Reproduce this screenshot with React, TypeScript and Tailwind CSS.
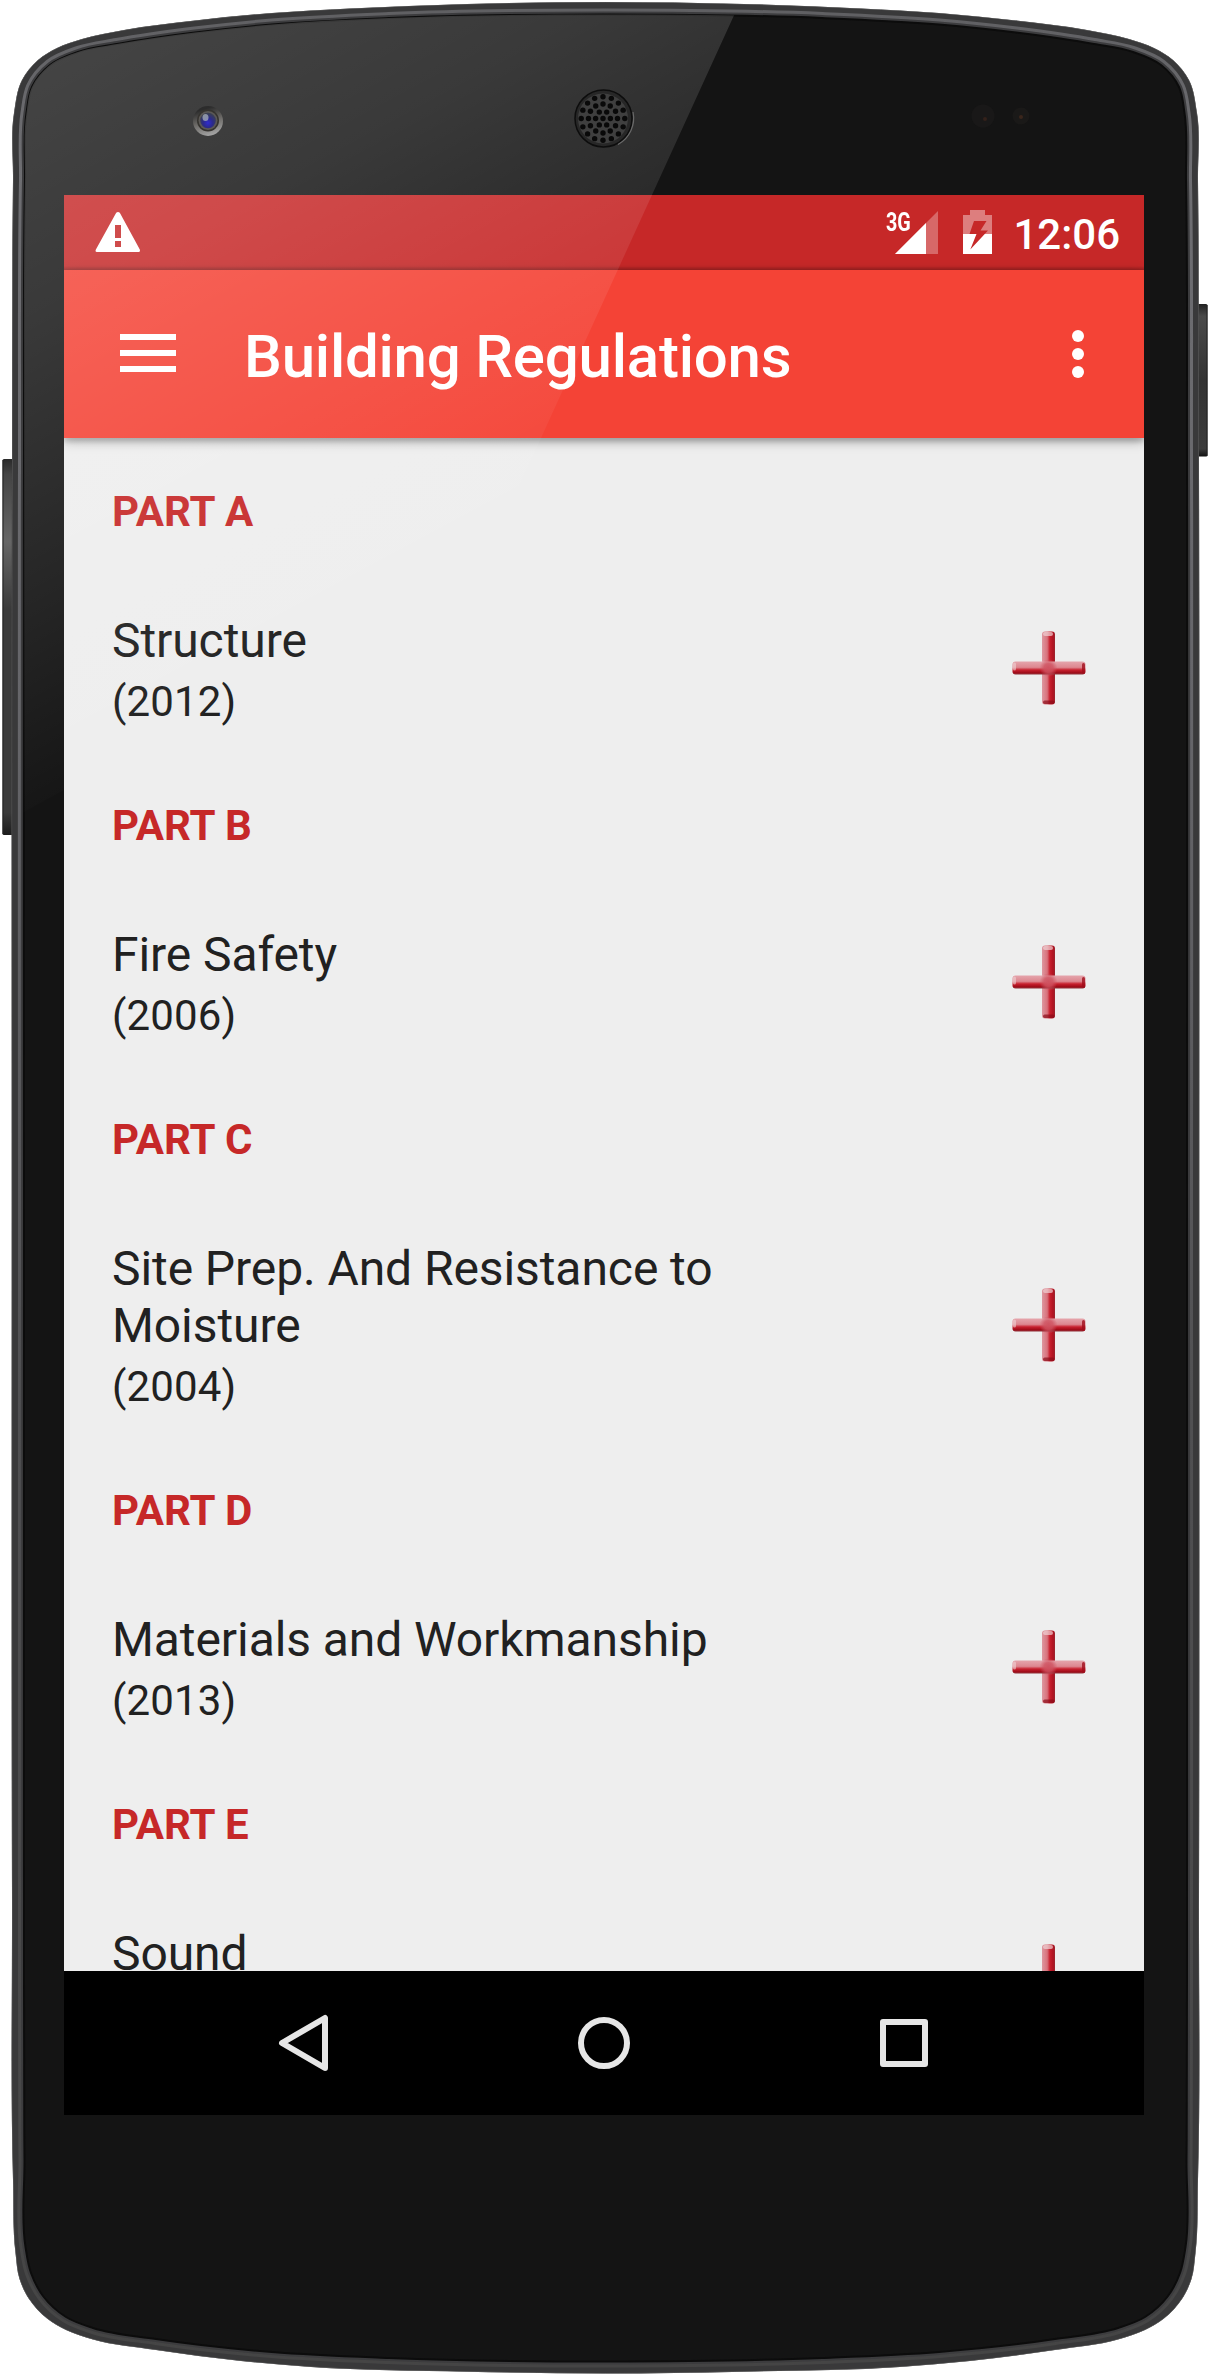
import React from "react";

type Point = [number, number];

const CENTER_X = 605.5;

// Left half of the outer shell, from bottom centre up to top centre.
const SHELL: Point[] = [
  [605.5, 2373.5], [467, 2371.7], [311, 2367], [241, 2361], [156, 2350], [93, 2339.5],
  [66, 2330], [47, 2318.5], [29, 2299], [19.5, 2279], [15.5, 2253], [13, 2180],
  [12, 1900], [11.7, 1200], [12, 460], [13, 180], [14, 113], [22, 80], [38, 60],
  [57, 48], [82, 39], [124, 30], [195, 20.5], [272, 13], [350, 8.5], [467, 4], [605.5, 2],
];

// Left half of the glass, same direction.
const GLASS: Point[] = [
  [605.5, 2361.5], [389, 2358], [272, 2352], [156, 2339], [93, 2328], [66, 2317],
  [43, 2296], [31, 2273], [25.5, 2247], [24.5, 2160], [24, 1900], [24, 1200],
  [24, 460], [25, 180], [26.5, 113], [32, 87], [50, 65], [78, 52], [117, 44],
  [195, 32.5], [272, 24.5], [389, 18], [605.5, 14.5],
];

// Smooth closed outline through the points and their mirror image.
function outline(half: Point[]): string {
  const mirrored = half
    .slice(1, -1)
    .reverse()
    .map(([x, y]): Point => [CENTER_X * 2 - x, y]);
  const pts = [...half, ...mirrored];
  const n = pts.length;
  let d = `M${pts[0][0]} ${pts[0][1]}`;
  const dist = (a: Point, b: Point) => Math.hypot(a[0] - b[0], a[1] - b[1]);
  const tangent = (i: number): Point => {
    const a = pts[(i - 1 + n) % n];
    const p = pts[i % n];
    const b = pts[(i + 1) % n];
    const u = dist(a, p);
    const v = dist(p, b);
    return [0, 1].map((k) => {
      const before = (p[k] - a[k]) / u;
      const after = (b[k] - p[k]) / v;
      return (before * v + after * u) / (u + v);
    }) as Point;
  };
  for (let i = 0; i < n; i++) {
    const p = pts[i];
    const q = pts[(i + 1) % n];
    const len = dist(p, q) / 3;
    const t = tangent(i);
    const s = tangent((i + 1) % n);
    d += `C${p[0] + t[0] * len} ${p[1] + t[1] * len} ${q[0] - s[0] * len} ${q[1] - s[1] * len} ${q[0]} ${q[1]}`;
  }
  return d + "Z";
}

const shellPath = outline(SHELL);
const glassPath = outline(GLASS);

function ring(count: number, radius: number): Point[] {
  return Array.from({ length: count }, (_, i): Point => {
    const a = (i / count) * Math.PI * 2;
    return [603 + Math.cos(a) * radius, 118.5 + Math.sin(a) * radius];
  });
}

const speakerHoles: Point[] = [[603, 118.5], ...ring(6, 7.4), ...ring(12, 14.5), ...ring(16, 21.8)];

function DeviceBody() {
  return (
    <svg className="absolute inset-0" width="1210" height="2375" viewBox="0 0 1210 2375">
      <defs>
        <linearGradient id="left-key" x1="0" y1="0" x2="0" y2="1">
          <stop offset="0" stopColor="#2a2a2a" />
          <stop offset="0.04" stopColor="#444" />
          <stop offset="0.22" stopColor="#666" />
          <stop offset="0.4" stopColor="#3a3a3a" />
          <stop offset="0.94" stopColor="#3a3a3a" />
          <stop offset="1" stopColor="#1c1c1c" />
        </linearGradient>
        <linearGradient id="right-key" x1="0" y1="0" x2="0" y2="1">
          <stop offset="0" stopColor="#222" />
          <stop offset="0.08" stopColor="#4a4a4a" />
          <stop offset="0.5" stopColor="#333" />
          <stop offset="0.95" stopColor="#3c3c3c" />
          <stop offset="1" stopColor="#111" />
        </linearGradient>
        <linearGradient id="rim" x1="0" y1="0" x2="0" y2="1">
          <stop offset="0" stopColor="#606063" />
          <stop offset="0.06" stopColor="#6e6e72" />
          <stop offset="0.3" stopColor="#66666a" />
          <stop offset="0.6" stopColor="#505052" />
          <stop offset="1" stopColor="#454545" />
        </linearGradient>
        <linearGradient id="lens-ring" x1="0.35" y1="0" x2="0.65" y2="1">
          <stop offset="0.1" stopColor="#2c2c2c" />
          <stop offset="0.5" stopColor="#6a6865" />
          <stop offset="1" stopColor="#a8a8a8" />
        </linearGradient>
        <radialGradient id="lens" cx="0.5" cy="0.65" r="0.6">
          <stop offset="0" stopColor="#2f2bd0" />
          <stop offset="0.5" stopColor="#2b2a8c" />
          <stop offset="1" stopColor="#3a3f52" />
        </radialGradient>
        <clipPath id="shell-clip">
          <path d={shellPath} />
        </clipPath>
      </defs>
      <rect x="2.5" y="459" width="14" height="376" rx="1.5" fill="url(#left-key)" />
      <path d="M3 460V834" stroke="#222" strokeWidth="1" />
      <rect x="1194" y="304" width="13.5" height="152.500" rx="1.5" fill="url(#right-key)" />
      <path d="M1207 305V456" stroke="#222" strokeWidth="1" />
      <path d={shellPath} fill="#39393a" />
      <g clipPath="url(#shell-clip)">
        <path d={glassPath} fill="none" stroke="url(#rim)" strokeWidth="12" />
        <path d={glassPath} fill="none" stroke="#3c3c3e" strokeWidth="6" />
        <path d={shellPath} fill="none" stroke="#606060" strokeWidth="1" />
      </g>
      <path d={glassPath} fill="#141414" stroke="#0c0c0c" strokeWidth="2" />
      <circle cx="983" cy="116" r="11.500" fill="#191818" />
      <circle cx="985" cy="119" r="2" fill="#33211a" />
      <circle cx="1021" cy="116" r="8.500" fill="#1a1918" />
      <circle cx="1021" cy="117" r="2" fill="#3a261c" />
    </svg>
  );
}

function Gloss() {
  return (
    <svg className="pointer-events-none absolute inset-0 z-20" width="1210" height="2375" viewBox="0 0 1210 2375">
      <defs>
        <linearGradient id="gloss" gradientUnits="userSpaceOnUse" x1="0" y1="0" x2="344" y2="641">
          <stop offset="0" stopColor="#fff" stopOpacity="0.22" />
          <stop offset="0.4" stopColor="#fff" stopOpacity="0.16" />
          <stop offset="0.75" stopColor="#fff" stopOpacity="0.075" />
          <stop offset="1" stopColor="#fff" stopOpacity="0.01" />
        </linearGradient>
        <clipPath id="glass-clip">
          <path d={glassPath} />
        </clipPath>
      </defs>
      <path d="M0 0H741L483 565L64 790L0 825Z" fill="url(#gloss)" clipPath="url(#glass-clip)" />
      <circle cx="603.500" cy="118.500" r="28.500" fill="#272727" stroke="#0d0d0d" strokeWidth="1.500" />
      <path d="M618 144.500A30 30 0 0 0 633 112" fill="none" stroke="#6a6a6a" strokeWidth="1.200" />
      <circle cx="603" cy="118.500" r="25" fill="#3f3f3f" />
      {speakerHoles.map(([x, y], i) => (
        <circle key={i} cx={x} cy={y} r="2.700" fill="#090909" />
      ))}
      <circle cx="208" cy="121" r="15" fill="url(#lens-ring)" />
      <circle cx="208" cy="120.500" r="11" fill="#35332f" />
      <circle cx="208" cy="120.500" r="9.500" fill="#5b5855" />
      <circle cx="208" cy="120.500" r="7.800" fill="url(#lens)" />
      <ellipse cx="205.500" cy="117.500" rx="3" ry="3.500" fill="#a7b0b8" opacity="0.75" />
    </svg>
  );
}

function StatusBar() {
  return (
    <div className="flex h-[75px] items-start bg-[#c62828] bg-[linear-gradient(to_top,rgba(0,0,0,0.2),transparent_4px)]">
      <svg className="mt-[16px] ml-[31px]" width="46" height="42" viewBox="0 0 46 42">
        <path
          fillRule="evenodd"
          fill="#fff"
          d="M21.200 1.800Q23 .2 24.800 1.800L44.800 38.500Q45.500 41 43.500 41H2Q-.2 41 .9 38.500ZM20 14V27H26V14ZM20 30V36H26V30Z"
        />
      </svg>
      <div className="mt-[16px] ml-auto flex text-white">
        <span className="mt-[2px] w-[9px] whitespace-nowrap text-[25px]/[20px] font-bold">
          <span className="inline-block origin-left scale-x-[0.79]">3G</span>
        </span>
        <svg width="43" height="43" viewBox="0 0 43 43">
          <path d="M43 0V43H0Z" fill="#fff" fillOpacity="0.3" />
          <path d="M31 12V43H0Z" fill="#fff" />
        </svg>
        <svg className="-mt-px ml-[25px]" width="29" height="44" viewBox="0 0 29 44">
          <mask id="bolt">
            <path d="M0 0H29V44H0Z" fill="#fff" />
            <path d="M11 11H23.500L17.500 20.500H25L7.300 39.500L13.500 24H6.500Z" fill="#000" />
          </mask>
          <g mask="url(#bolt)" fill="#fff">
            <path d="M7 0H22V5H29V24H0V5H7Z" fillOpacity="0.4" />
            <path d="M0 24H29V44H0Z" />
          </g>
        </svg>
        <span className="mt-[-1px] mr-[24px] ml-[21px] text-[42px]/[49px] font-medium">12:06</span>
      </div>
    </div>
  );
}

function Toolbar() {
  return (
    <header className="relative z-10 flex h-[168px] items-center bg-[#f44336] shadow-[0_3px_11px_rgba(0,0,0,0.32),0_4px_4px_rgba(0,0,0,0.12)]">
      <div className="mt-[-2px] ml-[56px] flex w-[56px] flex-col gap-[10px]">
        <i className="h-[6px] bg-white" />
        <i className="h-[6px] bg-white" />
        <i className="h-[6px] bg-white" />
      </div>
      <h1 className="mt-[5px] ml-[68px] text-[60px]/[70px] font-medium tracking-[-0.22px] text-white">Building Regulations</h1>
      <div className="mr-[60px] ml-auto flex flex-col gap-[6px]">
        <i className="size-[12px] rounded-full bg-white" />
        <i className="size-[12px] rounded-full bg-white" />
        <i className="size-[12px] rounded-full bg-white" />
      </div>
    </header>
  );
}

function PlusGradients() {
  return (
    <svg className="absolute size-0">
      <defs>
        <linearGradient id="plus-v" x1="0" x2="1" y1="0" y2="0">
          <stop offset="0" stopColor="#dd98a0" />
          <stop offset="0.4" stopColor="#d8727c" />
          <stop offset="0.6" stopColor="#c8202e" />
          <stop offset="0.85" stopColor="#b01321" />
          <stop offset="1" stopColor="#9a2630" />
        </linearGradient>
        <linearGradient id="plus-h" x1="0" x2="0" y1="0" y2="1">
          <stop offset="0" stopColor="#e5a5ac" />
          <stop offset="0.45" stopColor="#dd8790" />
          <stop offset="0.65" stopColor="#c8202e" />
          <stop offset="0.85" stopColor="#a20e1b" />
          <stop offset="1" stopColor="#8f3038" />
        </linearGradient>
        <radialGradient id="plus-c">
          <stop offset="0" stopColor="#cf5361" />
          <stop offset="0.5" stopColor="#cf5361" stopOpacity="0.8" />
          <stop offset="1" stopColor="#cf5361" stopOpacity="0" />
        </radialGradient>
      </defs>
    </svg>
  );
}

function Plus() {
  return (
    <svg className="mr-[58px] mb-[2px]" width="74" height="74" viewBox="0 0 74 74">
      <rect x="30" y="0.500" width="13" height="73" rx="3" fill="url(#plus-v)" />
      <rect x="31" y="1" width="10" height="4" rx="2" fill="#f0d3d6" opacity="0.7" />
      <rect x="31" y="69.500" width="11.500" height="3.500" rx="1.700" fill="#8c0c18" opacity="0.7" />
      <rect x="0.500" y="30.500" width="73" height="13" rx="3" fill="url(#plus-h)" />
      <rect x="1" y="31.500" width="3" height="8" rx="1.500" fill="#f0d3d6" opacity="0.6" />
      <rect x="70" y="32" width="3" height="11" rx="1.500" fill="#a00e1b" opacity="0.8" />
      <circle cx="36.500" cy="37" r="9" fill="url(#plus-c)" />
    </svg>
  );
}

const parts = [
  { part: "PART A", title: "Structure", year: "(2012)" },
  { part: "PART B", title: "Fire Safety", year: "(2006)" },
  { part: "PART C", title: "Site Prep. And Resistance to Moisture", year: "(2004)" },
  { part: "PART D", title: "Materials and Workmanship", year: "(2013)" },
  { part: "PART E", title: "Sound", year: "" },
];

export default function App() {
  return (
    <div className="relative h-[2375px] w-[1210px] overflow-hidden bg-white font-[Roboto,sans-serif]">
      <DeviceBody />
      <PlusGradients />
      <div className="relative px-[64px] pt-[195px]">
        <div className="flex h-[1920px] w-[1080px] flex-col overflow-hidden bg-[#eeeeee]">
          <StatusBar />
          <Toolbar />
          <main className="min-h-0 flex-1 overflow-hidden pt-[49px] text-[#212121]">
            {parts.map(({ part, title, year }) => (
              <section key={part} className="pb-[75px] pl-[48px]">
                <h2 className="text-[42px]/[49px] font-bold text-[#c62828]">{part}</h2>
                <div className="mt-[76px] flex items-center justify-between">
                  <div className="w-[640px]">
                    <h3 className="text-[48px]/[57px] tracking-[-0.08px]">{title}</h3>
                    <p className="mt-[8px] h-[49px] text-[42px]/[49px] tracking-[0.15px]">{year}</p>
                  </div>
                  <Plus />
                </div>
              </section>
            ))}
          </main>
          <nav className="h-[144px] shrink-0 bg-black pt-[42px]">
            <div className="flex items-center pl-[213px]">
              <svg width="60" height="60" viewBox="-30 -30 60 60" fill="none" stroke="#e6e6e6" strokeWidth="6" strokeLinejoin="round">
                <path d="M-25 0L18 -25V25Z" />
              </svg>
              <svg className="ml-[237px]" width="60" height="60" viewBox="-30 -30 60 60" fill="none" stroke="#e6e6e6" strokeWidth="6">
                <circle r="23" />
              </svg>
              <svg className="ml-[240px]" width="60" height="60" viewBox="-30 -30 60 60" fill="none" stroke="#e6e6e6" strokeWidth="6" strokeLinejoin="round">
                <rect x="-21" y="-21" width="42" height="42" />
              </svg>
            </div>
          </nav>
        </div>
      </div>
      <Gloss />
    </div>
  );
}
